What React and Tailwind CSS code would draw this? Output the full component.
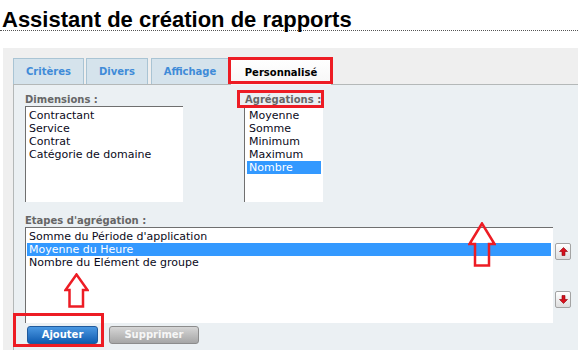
import React from "react";

const dimensions = ["Contractant", "Service", "Contrat", "Catégorie de domaine"];
const aggregations = ["Moyenne", "Somme", "Minimum", "Maximum", "Nombre"];
const steps = [
  "Somme du Période d'application",
  "Moyenne du Heure",
  "Nombre du Elément de groupe",
];

const tabs = [
  { label: "Critères", w: "w-[71px]", ml: "ml-0" },
  { label: "Divers", w: "w-[62px]", ml: "ml-[2px]" },
  { label: "Affichage", w: "w-[78px]", ml: "ml-[3px]" },
];

function ListBox({ items, selected, className, itemClass }) {
  return (
    <div className={`bg-white border-t border-l border-[#6f6f6f] pt-[2px] ${className}`}>
      {items.map((it) => (
        <div
          key={it}
          className={`h-[13px] leading-[13px] px-[2px] whitespace-nowrap ${itemClass} ${
            it === selected ? "bg-[#3399ff] text-white" : "text-[#0a0a1a]"
          }`}
        >
          {it}
        </div>
      ))}
    </div>
  );
}

function MoveButton({ down }) {
  return (
    <button className="w-[16px] h-[17px] border border-[#a3a3a3] rounded-[2px] bg-linear-to-b from-white to-[#dedede] flex items-center justify-center">
      <svg width="9" height="9" viewBox="0 0 9 9" className={down ? "rotate-180" : ""}>
        <polygon points="4.5,0.5 8.5,4.5 6,4.5 6,8.5 3,8.5 3,4.5 0.5,4.5" fill="#d8101c" stroke="#8a0008" strokeWidth="0.6" />
      </svg>
    </button>
  );
}

function HollowArrow({ w, h, head, shaftL, shaftR, className }) {
  const pts = `${w / 2},1.5 1.5,${head} ${shaftL},${head} ${shaftL},${h - 1.5} ${shaftR},${h - 1.5} ${shaftR},${head} ${w - 1.5},${head}`;
  return (
    <svg width={w} height={h} viewBox={`0 0 ${w} ${h}`} className={className}>
      <polygon points={pts} fill="none" stroke="#ed1c24" strokeWidth="2.5" />
    </svg>
  );
}

export default function App() {
  return (
    <div className="relative w-[578px] h-[350px] overflow-hidden bg-white font-['DejaVu_Sans',Verdana,sans-serif]">
      <h1 className="h-[31px] pt-[9px] pl-[2px] leading-[21px] text-[22px] font-bold text-black border-b border-dotted border-[#555] font-['Liberation_Sans',Arial,sans-serif]">
        Assistant de création de rapports
      </h1>

      <div className="mt-[17px] ml-[3px] h-[302px] bg-[#efefef] pt-[10px] pl-[10px] flex flex-col">
        {/* tabs */}
        <div className="flex h-[26px] items-end">
          {tabs.map((t) => (
            <div
              key={t.label}
              className={`${t.w} ${t.ml} h-[26px] border border-b-0 border-[#a9c4d4] bg-[#d5e3ec] text-[#3f8bd8] text-[10px] font-bold flex items-center justify-center`}
            >
              {t.label}
            </div>
          ))}
          <div className="w-[102px] ml-[1px] h-[27px] -mb-[1px] relative z-10 border border-b-0 border-[#b4b8b8] bg-linear-to-b from-white to-[#f6f6f6] text-black text-[10px] font-bold flex items-center justify-center">
            Personnalisé
          </div>
        </div>

        {/* panel */}
        <div className="flex-1 border-t border-l border-[#b4b8b8] bg-[#ebf0f3] pl-[11px] pt-[9px] text-[11px]">
          <div className="flex">
            <div className="w-[158px]">
              <div className="h-[12px] leading-[12px] text-[10px] font-bold text-[#666]">Dimensions :</div>
              <ListBox items={dimensions} className="h-[96px]" itemClass="mx-[1px]" />
            </div>
            <div className="ml-[61px] w-[79px]">
              <div className="h-[12px] leading-[12px] text-[10px] font-bold text-[#666] whitespace-nowrap pl-[1px]">Agrégations :</div>
              <ListBox items={aggregations} selected="Nombre" className="h-[96px]" itemClass="mx-[2px]" />
            </div>
          </div>

          <div className="mt-[13px] h-[12px] leading-[12px] text-[10px] font-bold text-[#666]">Etapes d'agrégation :</div>
          <div className="flex">
            <ListBox items={steps} selected="Moyenne du Heure" className="w-[528px] h-[96px]" itemClass="ml-[1px] mr-[2px]" />
            <div className="ml-[2px] flex flex-col pt-[16px] gap-[31px]">
              <MoveButton />
              <MoveButton down />
            </div>
          </div>

          <div className="flex mt-[3px] ml-[2px] gap-[11px]">
            <button className="w-[71px] h-[18px] rounded-[3px] border border-[#1f5a9c] bg-linear-to-b from-[#4a98e2] to-[#0c5cb0] text-white text-[10px] font-bold leading-[16px]">
              Ajouter
            </button>
            <button className="w-[90px] h-[18px] rounded-[3px] border border-[#8c8c8c] bg-linear-to-b from-[#d6d6d6] to-[#a6a6a6] text-[#f6f6f6] text-[10px] font-bold leading-[16px]">
              Supprimer
            </button>
          </div>
        </div>
      </div>

      {/* annotations */}
      <div className="absolute left-[228px] top-[57px] w-[105px] h-[27px] border-[3px] border-[#ed1c24] z-20" />
      <div className="absolute left-[237px] top-[90px] w-[87px] h-[18px] border-[3px] border-[#ed1c24] z-20" />
      <div className="absolute left-[13px] top-[313px] w-[91px] h-[34px] border-[3px] border-[#ed1c24] z-20" />
      <HollowArrow w={28} h={45} head={22} shaftL={7} shaftR={21} className="absolute left-[468px] top-[222px] z-20" />
      <HollowArrow w={25} h={35} head={17} shaftL={5.5} shaftR={19} className="absolute left-[64px] top-[273px] z-20" />
    </div>
  );
}
